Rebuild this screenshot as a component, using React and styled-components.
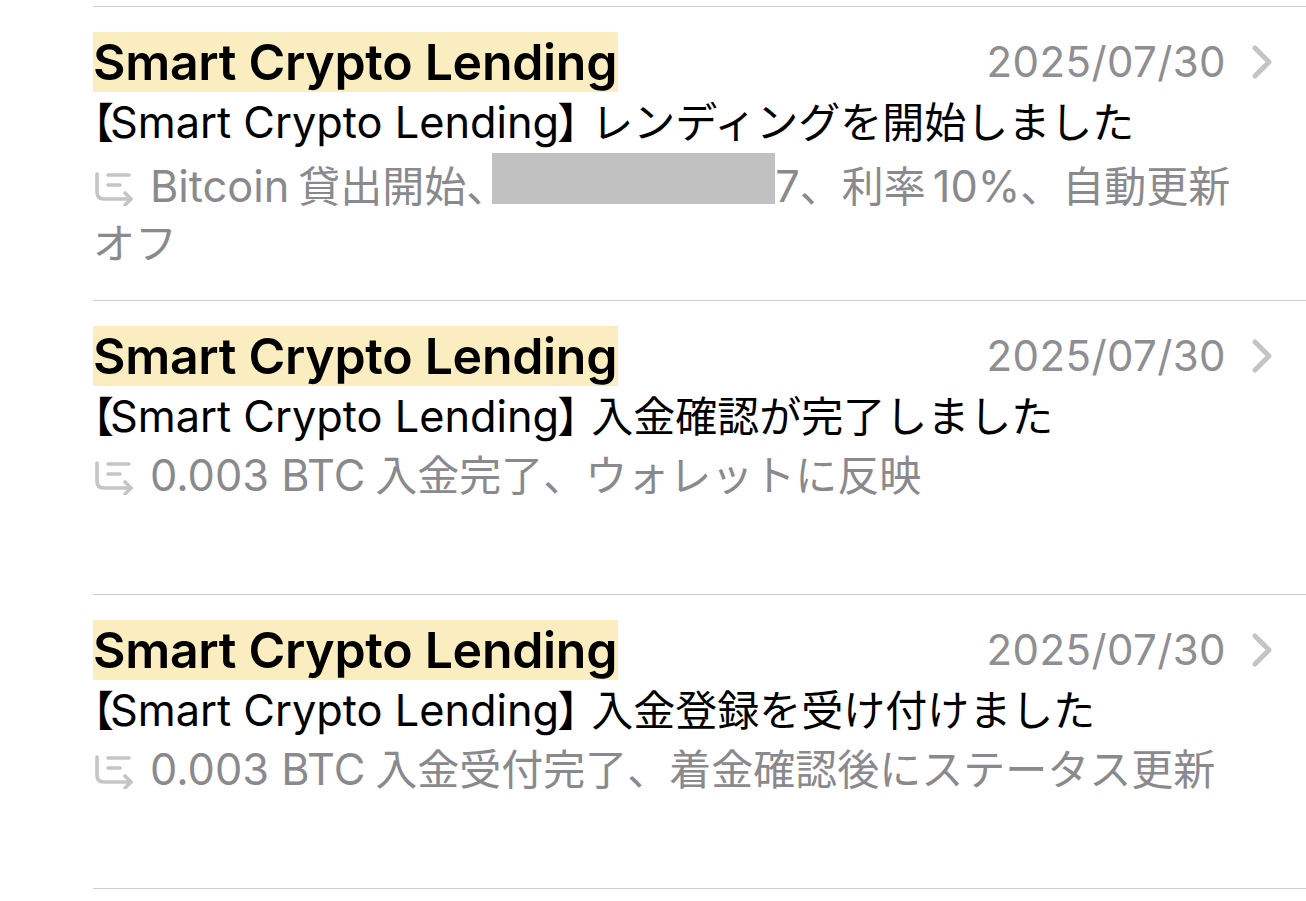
import React from "react";
import styled, { createGlobalStyle } from "styled-components";

const Global = createGlobalStyle`
  html, body { margin: 0; padding: 0; background: #ffffff; }
  body { font-family: Inter, "Noto Sans CJK JP", sans-serif; -webkit-font-smoothing: antialiased; }
`;

const List = styled.div`
  padding-top: 6px;
  width: 1306px;
`;

const Row = styled.div`
  margin-left: 93px;
  border-top: 1px solid #cfcfd3;
  padding: 25px 0 33px 0;
  &:last-child { border-bottom: 1px solid #cfcfd3; }
`;

const Header = styled.div`
  display: flex;
  align-items: center;
  height: 60px;
  padding-right: 33px;
`;

const Sender = styled.span`
  background: #faeec0;
  font-size: 50px;
  font-weight: 600;
  line-height: 60px;
  color: #000;
  letter-spacing: -0.3px;
  padding-right: 1px;
`;

const DateText = styled.span`
  margin-left: auto;
  font-size: 42px;
  color: #8e8e93;
  letter-spacing: 0.4px;
  line-height: 60px;
`;

const Chevron = styled.svg`
  width: 22px;
  height: 36px;
  margin-left: 25px;
  flex: none;
`;

const Subject = styled.div`
  font-size: 42px;
  line-height: 60px;
  color: #000;
  white-space: nowrap;
`;

const Latin = styled.span`
  font-size: 43.3px;
  margin-left: ${(p) => p.$lead || 0}px;
  margin-right: ${(p) => p.$gap || 0}px;
`;

const Bracket = styled.span`
  font-family: "Noto Sans CJK JP", sans-serif;
  line-height: 1;
  font-feature-settings: ${(p) => (p.$open ? '"halt"' : "normal")};
  margin: ${(p) => (p.$open ? "0 -4px 0 0" : "0 -8px 0 -2px")};
`;

const Preview = styled.div`
  font-size: 42px;
  line-height: 57px;
  height: 114px;
  color: #8a8a8e;
  width: 1150px;
  overflow: hidden;
`;

const ReplyIcon = styled.svg`
  width: 42px;
  height: 36px;
  margin-right: 15px;
  vertical-align: -4px;
`;

const Redacted = styled.span`
  display: inline-block;
  width: 283px;
  height: 51px;
  background: #c1c1c1;
  margin-left: -16px;
  vertical-align: -2px;
`;

const Reply = () => (
  <ReplyIcon viewBox="0 0 42 36" fill="none" stroke="#c5c5c8" strokeWidth="3.6" strokeLinecap="round" strokeLinejoin="round">
    <path d="M4 4 V22 Q4 29 11 29 H38" />
    <path d="M32 23 L38 29 L32 35" />
    <path d="M15 5 H36" />
    <path d="M15 15 H27" />
  </ReplyIcon>
);

const Mail = ({ title, preview }) => (
  <Row>
    <Header>
      <Sender>Smart Crypto Lending</Sender>
      <DateText>2025/07/30</DateText>
      <Chevron viewBox="0 0 22 36" fill="none" stroke="#c4c4c7" strokeWidth="5" strokeLinecap="round" strokeLinejoin="round">
        <path d="M4 4 L18 18 L4 32" />
      </Chevron>
    </Header>
    <Subject>
      <Bracket $open>【</Bracket>
      <Latin>Smart Crypto Lending</Latin>
      <Bracket>】</Bracket>
      {title}
    </Subject>
    <Preview>
      <Reply />
      {preview}
    </Preview>
  </Row>
);

export default function App() {
  return (
    <>
      <Global />
      <List>
        <Mail
          title="レンディングを開始しました"
          preview={
            <>
              <Latin $gap={5}>Bitcoin{"\u200A"}</Latin>貸出開始、<Redacted />
              <Latin>7</Latin>、利率<Latin $lead={7}>10%</Latin>、自動更新オフ
            </>
          }
        />
        <Mail
          title="入金確認が完了しました"
          preview={
            <>
              <Latin $gap={6}>0.003 BTC{"\u200A"}</Latin>入金完了、ウォレットに反映
            </>
          }
        />
        <Mail
          title="入金登録を受け付けました"
          preview={
            <>
              <Latin $gap={6}>0.003 BTC{"\u200A"}</Latin>入金受付完了、着金確認後にステータス更新
            </>
          }
        />
      </List>
    </>
  );
}
